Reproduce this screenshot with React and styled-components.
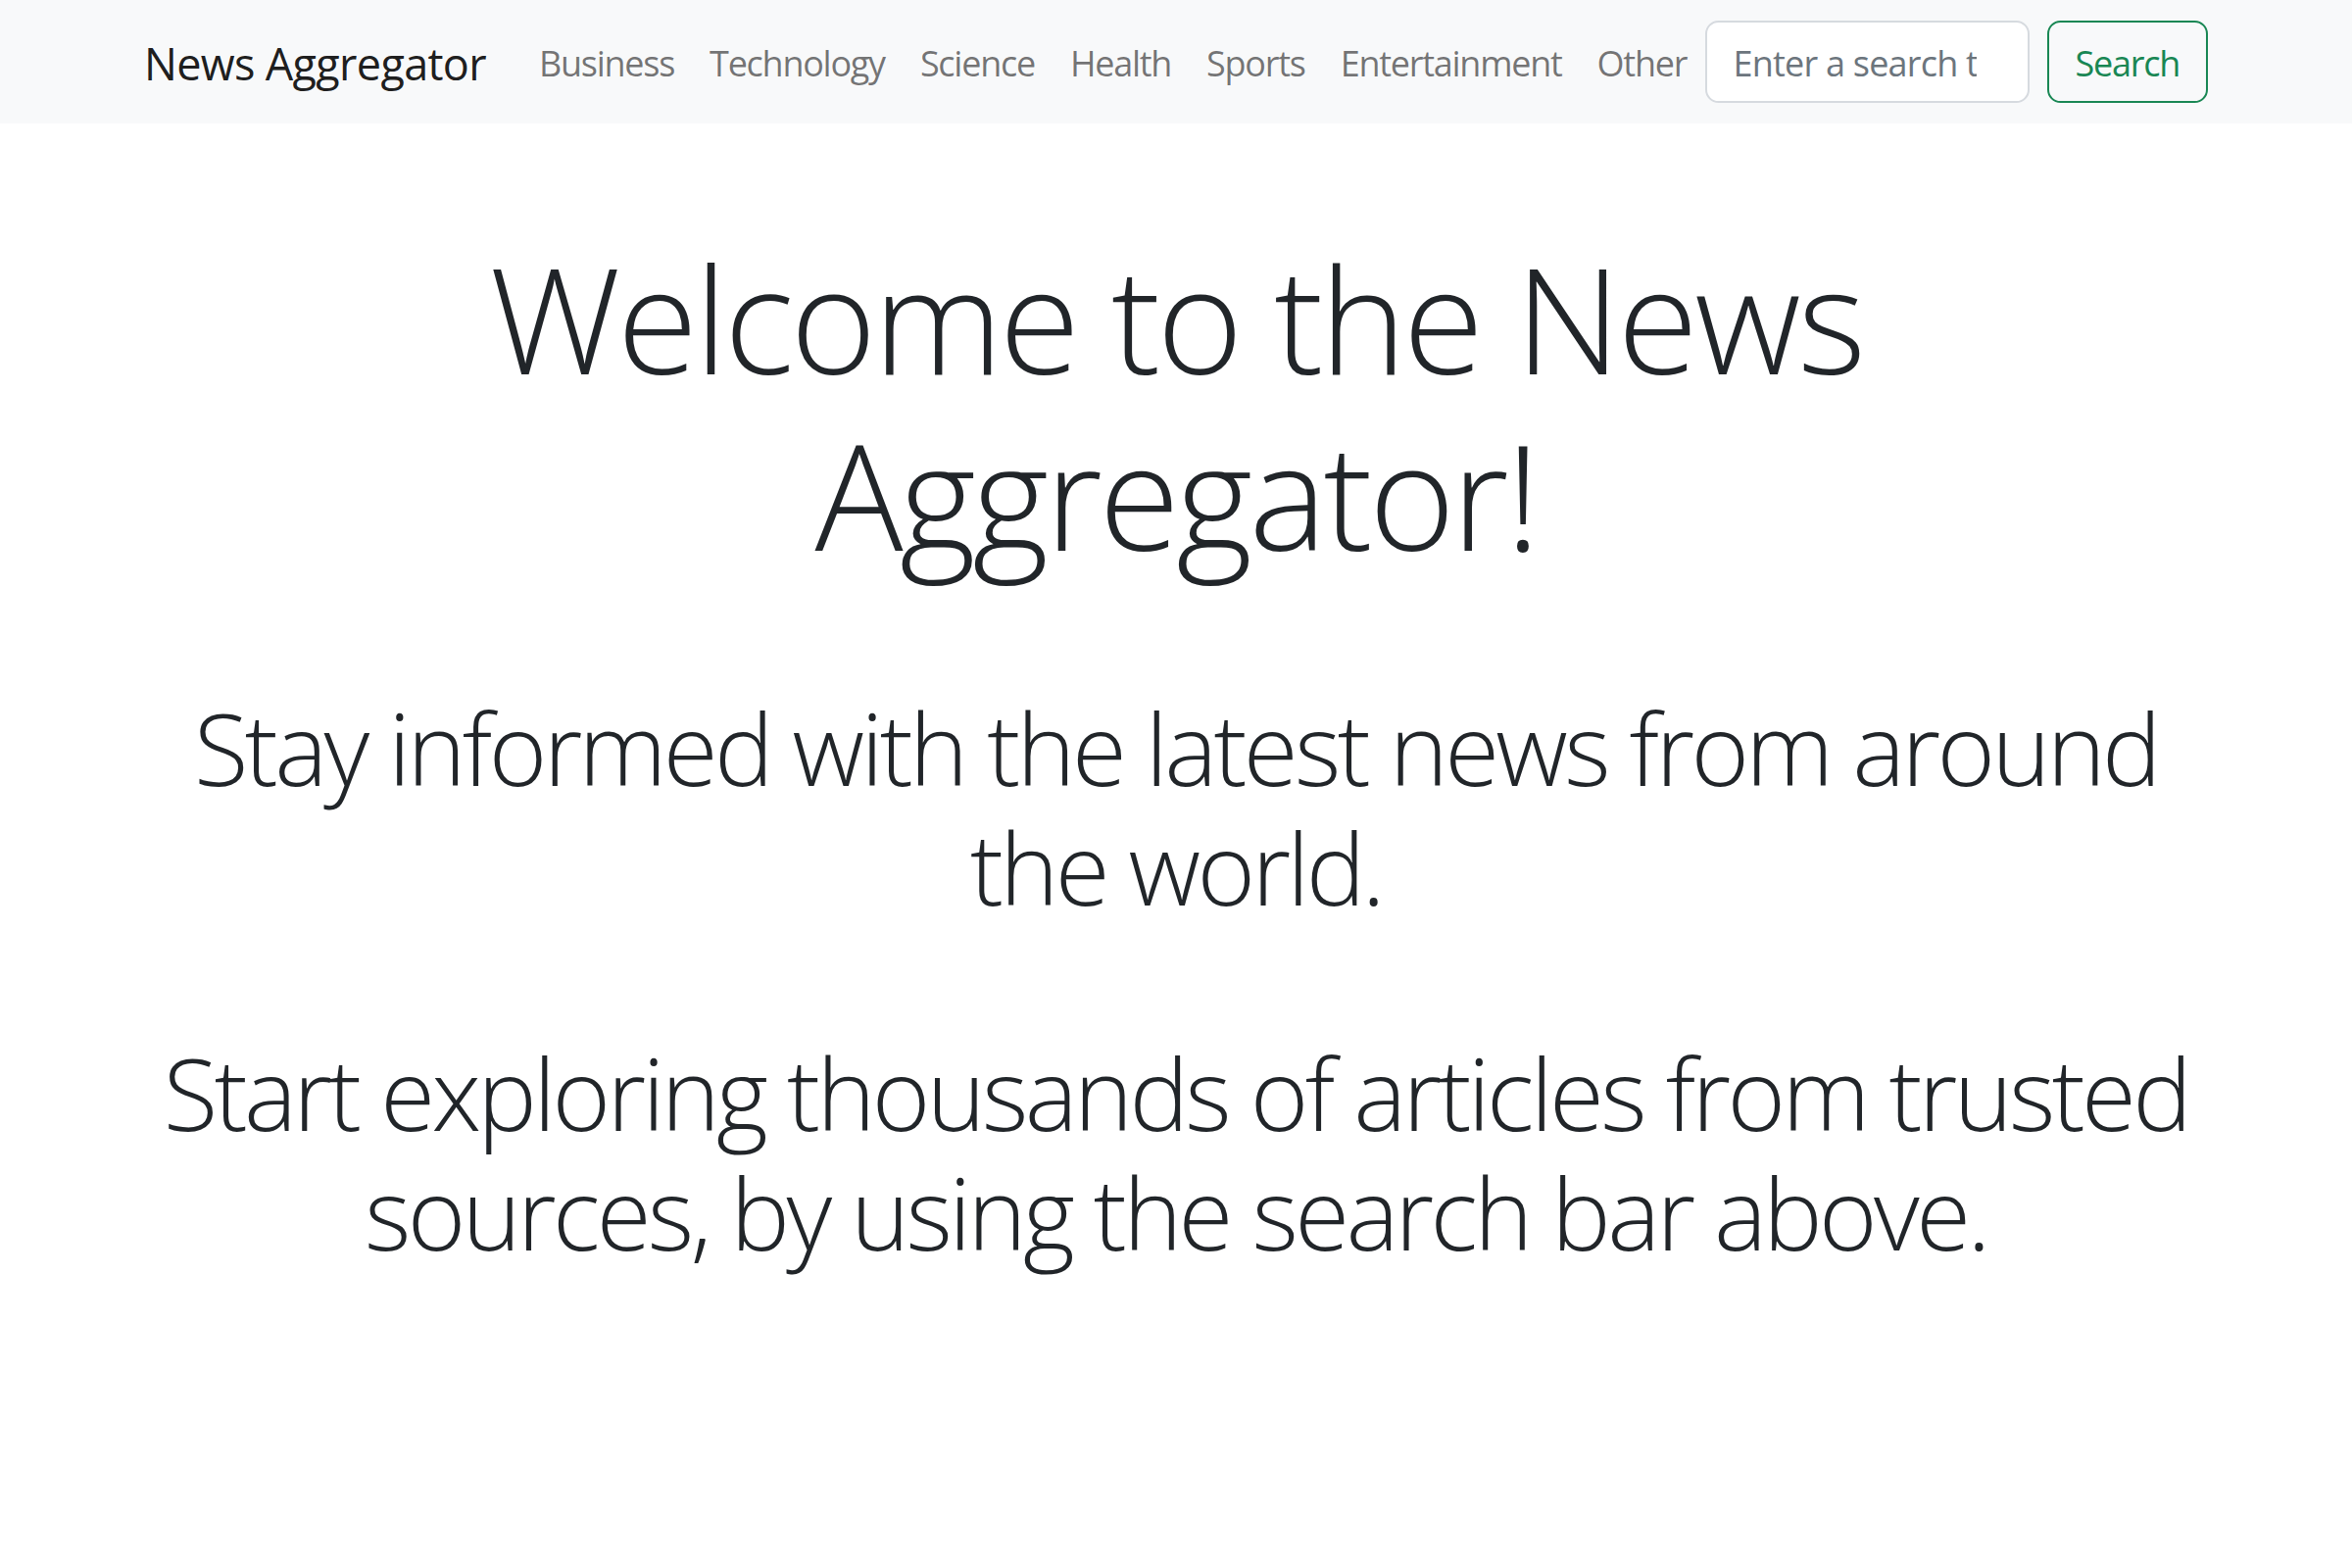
import React from "react";
import styled, { createGlobalStyle } from "styled-components";

const GlobalStyle = createGlobalStyle`
  html, body {
    margin: 0;
    padding: 0;
    background: #ffffff;
  }
  body {
    font-family: "Open Sans", "Noto Sans", "Liberation Sans", sans-serif;
    color: #212529;
    -webkit-font-smoothing: antialiased;
  }
  * { box-sizing: border-box; }
`;

const Navbar = styled.nav`
  background: #f8f9fa;
  padding: 18px 0;
`;

const Container = styled.div`
  width: 2160px;
  margin: 0 auto;
  padding: 0 27px;
`;

const NavInner = styled(Container)`
  display: flex;
  align-items: center;
`;

const Brand = styled.a`
  font-size: 45px;
  line-height: 1.5;
  padding: 13.25px 0 9.25px;
  margin-right: 36px;
  color: rgba(0, 0, 0, 0.9);
  text-decoration: none;
  letter-spacing: -0.015em;
  white-space: nowrap;
`;

const NavList = styled.ul`
  display: flex;
  list-style: none;
  margin: 0 auto 0 0;
  padding: 0;
`;

const NavLink = styled.a`
  display: block;
  font-size: 36px;
  line-height: 54px;
  padding: 20px 18px 16px;
  color: rgba(0, 0, 0, 0.55);
  text-decoration: none;
  letter-spacing: -0.035em;
  white-space: nowrap;
`;

const SearchForm = styled.form`
  display: flex;
  align-items: center;
`;

const SearchInput = styled.input`
  width: 331px;
  height: 84px;
  padding: 3px 27px 0;
  margin-right: 18px;
  font-family: inherit;
  font-size: 36px;
  letter-spacing: -0.022em;
  color: #212529;
  background: #ffffff;
  border: 2px solid #d6dadf;
  border-radius: 13.5px;
  outline: none;
  &::placeholder {
    color: #6c757d;
  }
`;

const OutlineButton = styled.button`
  height: 84px;
  padding: 3px 27px 0;
  font-family: inherit;
  font-size: 36px;
  letter-spacing: -0.035em;
  color: #198754;
  background: transparent;
  border: 2px solid #198754;
  border-radius: 13.5px;
  cursor: pointer;
`;

const Main = styled(Container)`
  padding-top: 108px;
  text-align: center;
`;

const Title = styled.h1`
  margin: 0 0 108px;
  font-size: 150px;
  font-weight: 300;
  line-height: 1.2;
  letter-spacing: -0.024em;
  color: #212529;
`;

const Lead = styled.p`
  margin: 0 0 108px;
  font-size: 101.7px;
  font-weight: 300;
  line-height: 1.2;
  letter-spacing: -0.036em;
  color: #212529;
`;

const categories = [
  "Business",
  "Technology",
  "Science",
  "Health",
  "Sports",
  "Entertainment",
  "Other",
];

export default function App() {
  return (
    <>
      <GlobalStyle />
      <Navbar>
        <NavInner>
          <Brand href="#">News Aggregator</Brand>
          <NavList>
            {categories.map((c) => (
              <li key={c}>
                <NavLink href="#">{c}</NavLink>
              </li>
            ))}
          </NavList>
          <SearchForm onSubmit={(e) => e.preventDefault()}>
            <SearchInput type="search" placeholder="Enter a search term" />
            <OutlineButton type="submit">Search</OutlineButton>
          </SearchForm>
        </NavInner>
      </Navbar>
      <Main>
        <Title>Welcome to the News Aggregator!</Title>
        <Lead>Stay informed with the latest news from around the world.</Lead>
        <Lead>
          Start exploring thousands of articles from trusted sources, by using
          the search bar above.
        </Lead>
      </Main>
    </>
  );
}
